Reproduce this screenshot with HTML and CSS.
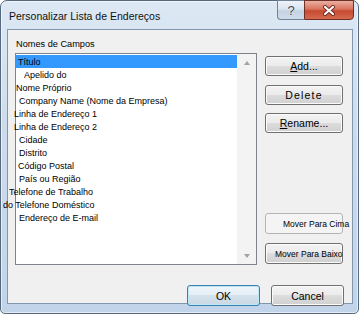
FILE: index.html
```html
<!DOCTYPE html>
<html lang="pt">
<head>
    <meta charset="UTF-8">
    <title>Personalizar Lista de Endereços</title>
    <link rel="stylesheet" href="styles.css">
</head>
<body>
<div class="window">
    <div class="titlebar">
        <div class="title">Personalizar Lista de Endereços</div>
        <div class="caption-buttons">
            <div class="cap-help">?</div>
            <div class="cap-close">
                <svg width="14" height="11" viewBox="0 0 14 11">
                    <path d="M3 2 L11 9 M11 2 L3 9" stroke="#6b2a22" stroke-width="4" stroke-linecap="round"/>
                    <path d="M3 2 L11 9 M11 2 L3 9" stroke="#ffffff" stroke-width="2.2" stroke-linecap="round"/>
                </svg>
            </div>
        </div>
    </div>

    <div class="client">
        <div class="main">
            <div class="left">
                <div class="fields-label">Nomes de Campos</div>
                <div class="listbox">
                    <div class="rows">
                        <div class="row selected off-2">Título</div>
                        <div class="row off-8">Apelido do</div>
                        <div class="row off-0">Nome Próprio</div>
                        <div class="row off-3">Company Name (Nome da Empresa)</div>
                        <div class="row off-n2">Linha de Endereço 1</div>
                        <div class="row off-n2">Linha de Endereço 2</div>
                        <div class="row off-3">Cidade</div>
                        <div class="row off-3">Distrito</div>
                        <div class="row off-2">Código Postal</div>
                        <div class="row off-3">País ou Região</div>
                        <div class="row off-n7">Telefone de Trabalho</div>
                        <div class="row off-n13">do Telefone Doméstico</div>
                        <div class="row off-3">Endereço de E-mail</div>
                    </div>
                    <div class="scroll">
                        <div class="arrow-btn"><span class="arrow-up"></span></div>
                        <div class="arrow-btn"><span class="arrow-down"></span></div>
                    </div>
                </div>
            </div>

            <div class="right">
                <button class="btn"><u>A</u>dd...</button>
                <button class="btn btn-delete">Delete</button>
                <button class="btn"><u>R</u>ename...</button>
                <div class="spacer"></div>
                <button class="btn btn-move btn-up">Mover Para Cima</button>
                <button class="btn btn-move btn-down">Mover Para Baixo</button>
            </div>
        </div>

        <div class="footer">
            <button class="btn btn-wide btn-default">OK</button>
            <button class="btn btn-wide">Cancel</button>
        </div>
    </div>
</div>
</body>
</html>
```

FILE: styles.css
```css
body {
    margin: 0;
    font-family: "Liberation Sans", Arial, sans-serif;
    background: #ffffff;
}

.window {
    width: 359px;
    height: 314px;
    box-sizing: border-box;
    border: 1px solid #56697f;
    border-radius: 7px 7px 5px 5px;
    background: linear-gradient(180deg, #dde8f4 0%, #cddcec 40%, #c2d4e9 100%);
    box-shadow: inset 0 0 0 1px rgba(255, 255, 255, 0.55);
    display: flex;
    flex-direction: column;
}

/* barra de titulo */
.titlebar {
    height: 28px;
    display: flex;
    align-items: flex-start;
}

.title {
    padding: 9px 0 0 8px;
    font-size: 10.5px;
    line-height: 12px;
    color: #111;
}

.caption-buttons {
    margin-left: auto;
    margin-right: 4px;
    margin-top: -1px;
    display: flex;
}

.cap-help,
.cap-close {
    height: 20px;
    box-sizing: border-box;
    display: flex;
    justify-content: center;
    align-items: center;
}

.cap-help {
    width: 27px;
    border: 1px solid #6f8298;
    border-right: none;
    border-radius: 0 0 0 4px;
    background: linear-gradient(180deg, #eef3f9 0%, #dae4ef 45%, #c3d2e3 55%, #cfdcea 100%);
    font-size: 13px;
    color: #3a4656;
    text-shadow: 0 0 2px #fff;
}

.cap-close {
    width: 50px;
    border: 1px solid #6e2f26;
    border-radius: 0 0 4px 0;
    background: linear-gradient(180deg, #eab0a2 0%, #d9735d 45%, #c64a31 55%, #d46a50 100%);
}

/* area cliente */
.client {
    margin: 0 5px 0 6px;
    height: 275px;
    box-sizing: border-box;
    border: 1px solid #8197b0;
    background: #f0f0f0;
    padding: 0 8px 0 7px;
    display: flex;
    flex-direction: column;
}

.main {
    display: flex;
}

.left {
    width: 242px;
}

.fields-label {
    height: 23px;
    box-sizing: border-box;
    padding: 8px 0 0 1px;
    font-size: 9.2px;
    line-height: 13px;
    color: #000;
}

.listbox {
    height: 212px;
    box-sizing: border-box;
    border: 1px solid #7f848c;
    background: #fff;
    display: flex;
}

.rows {
    width: 221px;
    padding-top: 1px;
}

.row {
    height: 13px;
    line-height: 14px;
    font-size: 9px;
    color: #000;
    white-space: nowrap;
}

.row.selected {
    background: #3399ff;
}

.off-0 { text-indent: 0; }
.off-2 { text-indent: 2px; }
.off-3 { text-indent: 3px; }
.off-8 { text-indent: 8px; }
.off-n2 { text-indent: -2px; }
.off-n7 { text-indent: -7px; }
.off-n13 { text-indent: -13px; }

.scroll {
    width: 19px;
    background: #f3f3f3;
    display: flex;
    flex-direction: column;
    justify-content: space-between;
}

.arrow-btn {
    height: 17px;
    display: flex;
    justify-content: center;
    align-items: center;
}

.arrow-up,
.arrow-down {
    width: 0;
    height: 0;
    border-left: 3.5px solid transparent;
    border-right: 3.5px solid transparent;
}

.arrow-up {
    border-bottom: 4px solid #a3a3a3;
}

.arrow-down {
    border-top: 4px solid #a3a3a3;
}

/* botoes */
.right {
    margin-left: 8px;
    padding-top: 26px;
    display: flex;
    flex-direction: column;
}

.btn {
    width: 78px;
    height: 20px;
    box-sizing: border-box;
    margin: 0 0 9px 0;
    padding: 0;
    border: 1px solid #707070;
    border-radius: 3px;
    background: linear-gradient(180deg, #f3f3f3 0%, #ebebeb 50%, #dddddd 50%, #d0d0d0 100%);
    box-shadow: inset 0 0 0 1px #fbfbfb;
    font-family: "Liberation Sans", Arial, sans-serif;
    font-size: 10.5px;
    color: #000;
    display: flex;
    justify-content: center;
    align-items: center;
    white-space: nowrap;
}

.btn-delete {
    letter-spacing: 1.2px;
    margin-bottom: 8px;
}

.spacer {
    height: 71px;
}

.btn-move {
    justify-content: flex-start;
    font-size: 8.5px;
    overflow: visible;
}

.btn-up {
    height: 21px;
    padding-left: 17px;
    border-color: #b4b4b4;
    background: #f4f4f4;
    box-shadow: none;
}

.btn-down {
    height: 21px;
    padding-left: 9px;
}

.footer {
    margin-top: 12px;
    display: flex;
    justify-content: flex-end;
    gap: 11px;
}

.btn-wide {
    width: 73px;
    height: 21px;
    margin: 0;
}

.btn-default {
    border-color: #3c7fb1;
    box-shadow: inset 0 0 0 1px #bfe6f7;
    background: linear-gradient(180deg, #eef6fb 0%, #e4eef5 50%, #d4e2ec 50%, #c9d8e3 100%);
}
```
